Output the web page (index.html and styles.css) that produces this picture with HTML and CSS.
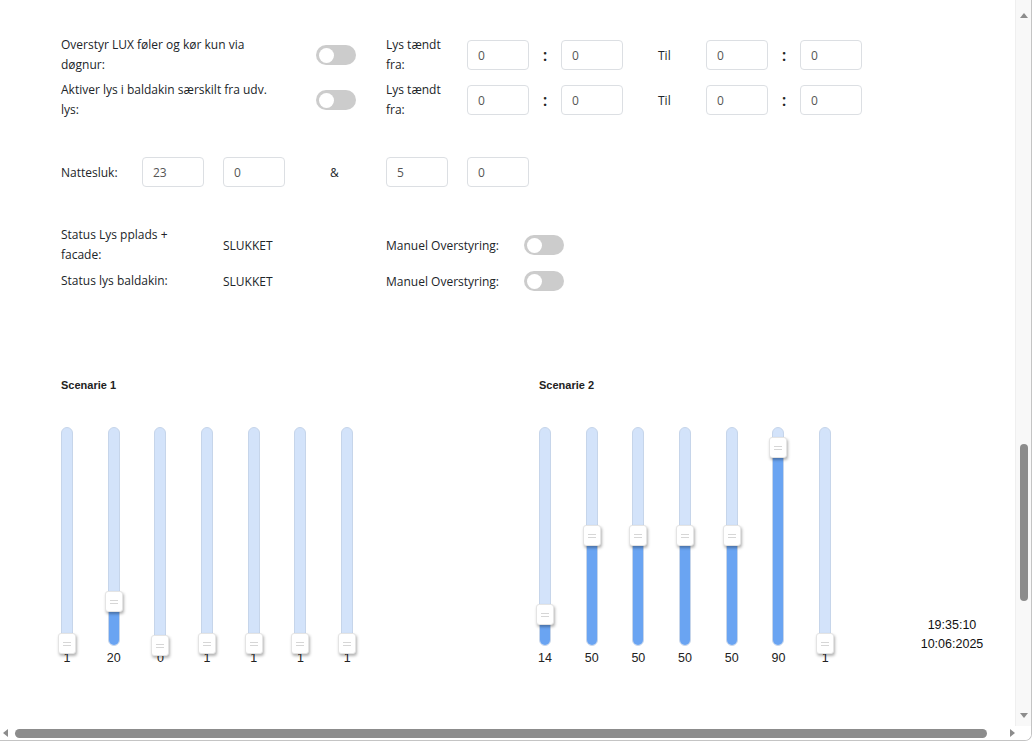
FILE: index.html
```html
<!DOCTYPE html>
<html lang="da">
<head>
<meta charset="utf-8">
<title>Lys styring</title>
<link rel="stylesheet" href="styles.css">
</head>
<body>
<div class="window">
  <main class="content">
    <section class="schedule">
      <div class="sched-row">
        <div class="lbl-main">Overstyr LUX føler og kør kun via døgnur:</div>
        <div class="cell-toggle"><span class="toggle"><span class="knob"></span></span></div>
        <div class="lbl-from">Lys tændt fra:</div>
        <div class="field">0</div>
        <div class="colon">:</div>
        <div class="field">0</div>
        <div class="til">Til</div>
        <div class="field">0</div>
        <div class="colon">:</div>
        <div class="field">0</div>
      </div>
      <div class="sched-row">
        <div class="lbl-main">Aktiver lys i baldakin særskilt fra udv. lys:</div>
        <div class="cell-toggle"><span class="toggle"><span class="knob"></span></span></div>
        <div class="lbl-from">Lys tændt fra:</div>
        <div class="field">0</div>
        <div class="colon">:</div>
        <div class="field">0</div>
        <div class="til">Til</div>
        <div class="field">0</div>
        <div class="colon">:</div>
        <div class="field">0</div>
      </div>
    </section>

    <section class="night">
      <div class="lbl-night">Nattesluk:</div>
      <div class="field">23</div>
      <div class="field gap">0</div>
      <div class="amp">&amp;</div>
      <div class="field">5</div>
      <div class="field gap">0</div>
    </section>

    <section class="status">
      <div class="status-row tall">
        <div class="lbl-status">Status Lys pplads + facade:</div>
        <div class="state">SLUKKET</div>
        <div class="lbl-manual">Manuel Overstyring:</div>
        <span class="toggle"><span class="knob"></span></span>
      </div>
      <div class="status-row">
        <div class="lbl-status">Status lys baldakin:</div>
        <div class="state">SLUKKET</div>
        <div class="lbl-manual">Manuel Overstyring:</div>
        <span class="toggle"><span class="knob"></span></span>
      </div>
    </section>

    <section class="scenes">
      <div class="scene scene-1">
        <h3 class="scene-title">Scenarie 1</h3>
        <div class="sliders">
          <div class="slider" style="--v:1"><div class="track"><div class="fill"></div><div class="thumb"></div></div><div class="val">1</div></div>
          <div class="slider" style="--v:20"><div class="track"><div class="fill"></div><div class="thumb"></div></div><div class="val">20</div></div>
          <div class="slider" style="--v:0"><div class="track"><div class="fill"></div><div class="thumb"></div></div><div class="val">0</div></div>
          <div class="slider" style="--v:1"><div class="track"><div class="fill"></div><div class="thumb"></div></div><div class="val">1</div></div>
          <div class="slider" style="--v:1"><div class="track"><div class="fill"></div><div class="thumb"></div></div><div class="val">1</div></div>
          <div class="slider" style="--v:1"><div class="track"><div class="fill"></div><div class="thumb"></div></div><div class="val">1</div></div>
          <div class="slider" style="--v:1"><div class="track"><div class="fill"></div><div class="thumb"></div></div><div class="val">1</div></div>
        </div>
      </div>
      <div class="scene scene-2">
        <h3 class="scene-title">Scenarie 2</h3>
        <div class="sliders">
          <div class="slider" style="--v:14"><div class="track"><div class="fill"></div><div class="thumb"></div></div><div class="val">14</div></div>
          <div class="slider" style="--v:50"><div class="track"><div class="fill"></div><div class="thumb"></div></div><div class="val">50</div></div>
          <div class="slider" style="--v:50"><div class="track"><div class="fill"></div><div class="thumb"></div></div><div class="val">50</div></div>
          <div class="slider" style="--v:50"><div class="track"><div class="fill"></div><div class="thumb"></div></div><div class="val">50</div></div>
          <div class="slider" style="--v:50"><div class="track"><div class="fill"></div><div class="thumb"></div></div><div class="val">50</div></div>
          <div class="slider" style="--v:90"><div class="track"><div class="fill"></div><div class="thumb"></div></div><div class="val">90</div></div>
          <div class="slider" style="--v:1"><div class="track"><div class="fill"></div><div class="thumb"></div></div><div class="val">1</div></div>
        </div>
      </div>
      <div class="clock">
        <div>19:35:10</div>
        <div>10:06:2025</div>
      </div>
    </section>
  </main>

  <div class="vscroll">
    <span class="arrow up"></span>
    <span class="vtrack"><span class="vthumb"></span></span>
    <span class="arrow down"></span>
  </div>
  <div class="hscroll">
    <span class="arrow left"></span>
    <span class="htrack"><span class="hthumb"></span></span>
    <span class="arrow right"></span>
  </div>
  <div class="corner"></div>
</div>
</body>
</html>
```

FILE: styles.css
```css
* { box-sizing: border-box; }

html, body {
  margin: 0;
  padding: 0;
  background: #ffffff;
}

body {
  width: 1035px;
  height: 742px;
  overflow: hidden;
  font-family: "Open Sans", "Noto Sans", sans-serif;
  font-size: 12px;
  color: #212529;
}

.window {
  width: 1032px;
  height: 741px;
  display: grid;
  grid-template-columns: 1fr 16px;
  grid-template-rows: 1fr 14px;
  border-right: 1px solid #c4c4c4;
  border-bottom: 1px solid #c4c4c4;
  border-bottom-right-radius: 7px;
  overflow: hidden;
}

.content {
  padding: 35px 0 0 61px;
  overflow: hidden;
}

/* ---------- schedule rows ---------- */
.schedule {
  display: flex;
  flex-direction: column;
  gap: 5px;
}

.sched-row {
  display: flex;
  align-items: center;
  height: 40px;
}

.lbl-main {
  width: 255px;
  padding-right: 32px;
  line-height: 20px;
}

.cell-toggle {
  width: 70px;
  display: flex;
  align-items: center;
}

.lbl-from {
  width: 81px;
  padding-right: 18px;
  line-height: 20px;
}

.field {
  width: 62px;
  height: 30px;
  border: 1px solid #dcdfe3;
  border-radius: 4px;
  padding: 0 10px;
  display: flex;
  align-items: center;
  color: #555;
  font-size: 12px;
}

.colon {
  width: 32px;
  text-align: center;
  font-size: 17px;
  font-weight: 600;
  color: #222;
  line-height: 20px;
}

.til {
  width: 83px;
  padding-left: 35px;
}

/* ---------- toggle ---------- */
.toggle {
  width: 40px;
  height: 20px;
  border-radius: 10px;
  background: #cccccc;
  display: flex;
  align-items: center;
  padding-left: 3px;
}

.knob {
  width: 15px;
  height: 15px;
  border-radius: 50%;
  background: #ffffff;
}

/* ---------- night ---------- */
.night {
  display: flex;
  align-items: center;
  margin-top: 37px;
  height: 30px;
}

.lbl-night { width: 81px; }

.field.gap { margin-left: 19px; }

.amp {
  width: 101px;
  padding-left: 45px;
}

/* ---------- status ---------- */
.status {
  margin-top: 38px;
  display: flex;
  flex-direction: column;
  gap: 6px;
}

.status-row {
  display: flex;
  align-items: center;
  height: 20px;
}

.status-row.tall { height: 40px; }

.lbl-status {
  width: 162px;
  padding-right: 30px;
  line-height: 20px;
}

.state { width: 163px; }

.lbl-manual { width: 138px; }

/* ---------- scenes ---------- */
.scenes {
  display: flex;
  margin-top: 87px;
}

.scene-1 { width: 478px; }
.scene-2 { width: 353px; }

.scene-title {
  margin: 0;
  font-family: "Liberation Sans", Arial, sans-serif;
  font-size: 11px;
  font-weight: bold;
  line-height: 14px;
  color: #222;
}

.sliders {
  display: flex;
  gap: 34.7px;
  margin-top: 35px;
}

.slider {
  width: 12px;
  display: flex;
  flex-direction: column;
  align-items: center;
}

.track {
  position: relative;
  width: 12px;
  height: 219px;
  border-radius: 6px;
  background: #d3e3fa;
  border: 1px solid #c6d5ea;
  display: flex;
  align-items: flex-end;
}

.fill {
  width: 100%;
  height: calc(var(--v) * 2.17px);
  background: #6aa4f2;
  border-radius: 0 0 6px 6px;
}

.thumb {
  position: absolute;
  left: 50%;
  bottom: calc(var(--v) * 2.2px - 11px);
  width: 18px;
  height: 21px;
  margin-left: -9px;
  background: #ffffff;
  border: 1px solid #e4e4e4;
  border-radius: 3px;
  box-shadow: 1px 2px 3px rgba(0, 0, 0, 0.3);
  z-index: 2;
}

.thumb::before,
.thumb::after {
  content: "";
  position: absolute;
  left: 4px;
  right: 4px;
  height: 1px;
  background: #d6d6d6;
}

.thumb::before { top: 8px; }
.thumb::after { top: 11px; }

.val {
  margin-top: 5px;
  font-family: "Liberation Sans", Arial, sans-serif;
  font-size: 12.5px;
  line-height: 15px;
  color: #222;
  white-space: nowrap;
}

.clock {
  width: 120px;
  margin-top: 238px;
  text-align: center;
  font-family: "Liberation Sans", Arial, sans-serif;
  font-size: 12.5px;
  line-height: 19px;
  color: #111;
}

/* ---------- scrollbars ---------- */
.vscroll {
  grid-column: 2;
  grid-row: 1;
  background: #f8f8f8;
  border-left: 1px solid #efefef;
  display: flex;
  flex-direction: column;
  align-items: center;
}

.vtrack {
  flex: 1;
  width: 100%;
  display: flex;
  justify-content: center;
  padding-top: 426px;
}

.vthumb {
  width: 8px;
  height: 157px;
  border-radius: 4px;
  background: #8c8c8c;
}

.hscroll {
  grid-column: 1;
  grid-row: 2;
  display: flex;
  align-items: center;
  background: #ffffff;
}

.htrack {
  flex: 1;
  display: flex;
  align-items: center;
  padding-right: 15px;
}

.hthumb {
  width: 972px;
  height: 9px;
  border-radius: 4.5px;
  background: #8c8c8c;
}

.corner {
  grid-column: 2;
  grid-row: 2;
  background: #ffffff;
}

.arrow {
  width: 0;
  height: 0;
  flex: none;
}

.arrow.up {
  margin-top: 13px;
  border-left: 4px solid transparent;
  border-right: 4px solid transparent;
  border-bottom: 5px solid #8c8c8c;
}

.arrow.down {
  margin-bottom: 8px;
  border-left: 4px solid transparent;
  border-right: 4px solid transparent;
  border-top: 5px solid #8c8c8c;
}

.arrow.left {
  margin: 0 7px 0 3px;
  border-top: 4px solid transparent;
  border-bottom: 4px solid transparent;
  border-right: 5px solid #8c8c8c;
}

.arrow.right {
  margin-right: 0;
  border-top: 4px solid transparent;
  border-bottom: 4px solid transparent;
  border-left: 5px solid #8c8c8c;
}
```
